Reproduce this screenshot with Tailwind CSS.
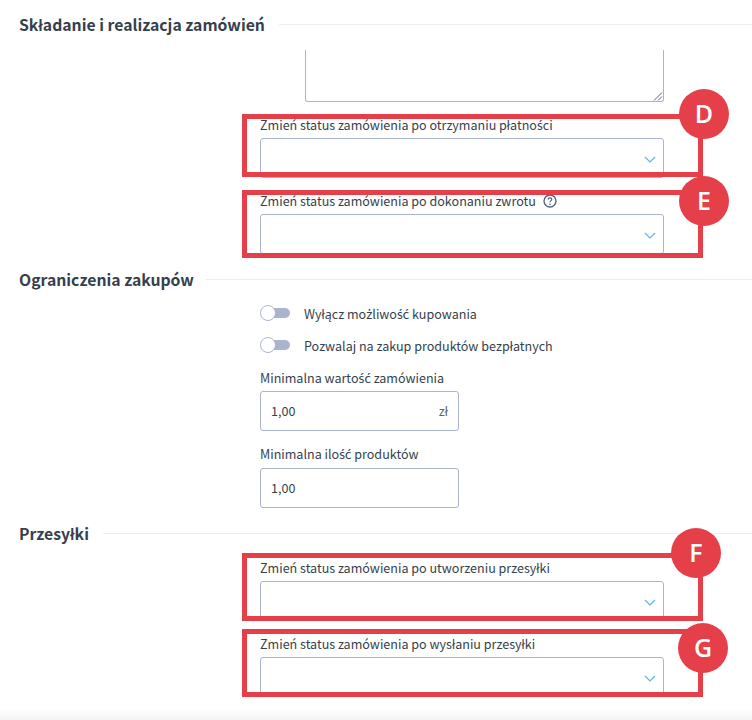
<!DOCTYPE html>
<html lang="pl">
  <head>
    <meta charset="UTF-8" />
    <title>Ustawienia zamówień</title>
    <script src="https://cdn.jsdelivr.net/npm/@tailwindcss/browser@4"></script>
  </head>
  <body class="bg-white font-['Noto_Sans_CJK_SC','Noto_Sans',sans-serif] text-[#363f4d] overflow-hidden">
    <div class="relative h-[720px] w-[752px] overflow-hidden">
      <!-- Składanie i realizacja zamówień -->
      <section class="h-[268px]">
        <div class="flex items-center gap-[14px] pl-[19px] pt-[14px]">
          <h2 class="text-[15.75px] leading-[22px] font-semibold whitespace-nowrap">Składanie i realizacja zamówień</h2>
          <div class="mb-[2px] h-px flex-1 bg-[#ebedf0]"></div>
        </div>
        <div class="relative ml-[305px] mt-[14px] h-[52px] w-[359px] rounded-b-[3px] border border-t-0 border-[#abb4cf]">
          <svg class="absolute right-0 bottom-0" width="10" height="10" viewBox="0 0 10 10" fill="none" stroke="#5c3a70" stroke-width="0.9"><path d="M1 9.5 9 1.5M5 9.5 9 5.5"/></svg>
        </div>
        <div class="ml-[260px] mt-[14px] w-[404px]">
          <label class="block text-[12.55px] leading-[18px] whitespace-nowrap">Zmień status zamówienia po otrzymaniu płatno<span class="font-['Lato',sans-serif] text-[13.5px]">ś</span>ci</label>
          <div class="mt-[4px] flex h-[40px] items-center justify-end rounded-[3px] border border-[#abb4cf] pr-[7px] pt-[3px]">
            <svg width="12" height="7" viewBox="0 0 12 7" fill="none" stroke="#5cb4e6" stroke-width="1.2"><path d="M1 1 6 6 11 1"/></svg>
          </div>
        </div>
        <div class="ml-[260px] mt-[14px] w-[404px]">
          <label class="flex items-center gap-[7px] text-[12.55px] leading-[18px] whitespace-nowrap">Zmień status zamówienia po dokonaniu zwrotu
            <svg width="14" height="14" viewBox="0 0 14 14" fill="none"><circle cx="7" cy="7" r="6" stroke="#4f5f82" stroke-width="1.3"/><path d="M5.2 5.6C5.3 4.5 6.1 3.9 7 3.9s1.8.6 1.8 1.6C8.8 6.7 7 6.6 7 8.2" stroke="#4f5f82" stroke-width="1.2"/><circle cx="7" cy="10.2" r=".8" fill="#4f5f82"/></svg>
          </label>
          <div class="mt-[4px] flex h-[40px] items-center justify-end rounded-[3px] border border-[#abb4cf] pr-[7px] pt-[3px]">
            <svg width="12" height="7" viewBox="0 0 12 7" fill="none" stroke="#5cb4e6" stroke-width="1.2"><path d="M1 1 6 6 11 1"/></svg>
          </div>
        </div>
      </section>

      <!-- Ograniczenia zakupów -->
      <section class="h-[255px]">
        <div class="flex items-center gap-[12px] pl-[19px] pt-[1px]">
          <h2 class="text-[15.75px] leading-[22px] font-semibold whitespace-nowrap">Ograniczenia zakupów</h2>
          <div class="mb-[2px] h-px flex-1 bg-[#ebedf0]"></div>
        </div>
        <div class="ml-[260px] w-[404px]">
          <div class="mt-[13px] flex h-[20px] items-center gap-[14px] text-[12.55px] whitespace-nowrap">
            <span class="relative -mt-[2px] block h-[16px] w-[30px] shrink-0"><span class="absolute left-[4px] top-[3px] h-[10px] w-[26px] rounded-full bg-[#abb4cf]"></span><span class="absolute left-0 top-0 h-[16px] w-[16px] rounded-full border border-[#abb4cf] bg-white"></span></span>
            <span>Wyłącz mo<span class="font-['Lato',sans-serif] text-[13.5px]">ż</span>liwo<span class="font-['Lato',sans-serif] text-[13.5px]">ść</span> kupowania</span>
          </div>
          <div class="mt-[12px] flex h-[20px] items-center gap-[14px] text-[12.55px] whitespace-nowrap">
            <span class="relative -mt-[2px] block h-[16px] w-[30px] shrink-0"><span class="absolute left-[4px] top-[3px] h-[10px] w-[26px] rounded-full bg-[#abb4cf]"></span><span class="absolute left-0 top-0 h-[16px] w-[16px] rounded-full border border-[#abb4cf] bg-white"></span></span>
            <span>Pozwalaj na zakup produktów bezpłatnych</span>
          </div>
          <label class="mt-[13px] block text-[12.55px] leading-[18px] whitespace-nowrap">Minimalna warto<span class="font-['Lato',sans-serif] text-[13.5px]">ść</span> zamówienia</label>
          <div class="mt-[4px] flex h-[40px] w-[199px] items-center justify-between rounded-[3px] border border-[#abb4cf] px-[10px] text-[12.55px]">
            <span>1,00</span><span class="text-[#5d6675]">zł</span>
          </div>
          <label class="mt-[14px] block text-[12.55px] leading-[18px] whitespace-nowrap">Minimalna ilo<span class="font-['Lato',sans-serif] text-[13.5px]">ść</span> produktów</label>
          <div class="mt-[5px] flex h-[40px] w-[199px] items-center rounded-[3px] border border-[#abb4cf] pl-[10px] text-[12.55px]">1,00</div>
        </div>
      </section>

      <!-- Przesyłki -->
      <section>
        <div class="flex items-center gap-[14px] pl-[19px]">
          <h2 class="text-[15.75px] leading-[22px] font-semibold whitespace-nowrap">Przesyłki</h2>
          <div class="mb-[2px] h-px flex-1 bg-[#ebedf0]"></div>
        </div>
        <div class="ml-[260px] mt-[14px] w-[404px]">
          <label class="block text-[12.55px] leading-[18px] whitespace-nowrap">Zmień status zamówienia po utworzeniu przesyłki</label>
          <div class="mt-[4px] flex h-[40px] items-center justify-end rounded-[3px] border border-[#abb4cf] pr-[7px] pt-[3px]">
            <svg width="12" height="7" viewBox="0 0 12 7" fill="none" stroke="#5cb4e6" stroke-width="1.2"><path d="M1 1 6 6 11 1"/></svg>
          </div>
        </div>
        <div class="ml-[260px] mt-[14px] w-[404px]">
          <label class="block text-[12.55px] leading-[18px] whitespace-nowrap">Zmień status zamówienia po wysłaniu przesyłki</label>
          <div class="mt-[4px] flex h-[40px] items-center justify-end rounded-[3px] border border-[#abb4cf] pr-[7px] pt-[3px]">
            <svg width="12" height="7" viewBox="0 0 12 7" fill="none" stroke="#5cb4e6" stroke-width="1.2"><path d="M1 1 6 6 11 1"/></svg>
          </div>
        </div>
      </section>

      <div class="absolute inset-x-0 bottom-0 h-[12px] bg-linear-to-b from-white to-[#f5f5f6]"></div>

      <!-- annotation boxes -->
      <div class="absolute left-[242px] top-[114px] h-[63px] w-[461px] border-[5px] border-[#e5404a]"></div>
      <div class="absolute left-[242px] top-[190px] h-[68px] w-[461px] border-[5px] border-[#e5404a]"></div>
      <div class="absolute left-[242px] top-[553px] h-[68px] w-[461px] border-[5px] border-[#e5404a]"></div>
      <div class="absolute left-[242px] top-[629px] h-[68px] w-[461px] border-[5px] border-[#e5404a]"></div>
      <div class="absolute left-[679px] top-[89px] flex h-[50px] w-[50px] items-center justify-center rounded-full bg-[#e5404a] font-['Open_Sans',sans-serif] text-[25px] font-semibold text-white">D</div>
      <div class="absolute left-[679px] top-[176px] flex h-[50px] w-[50px] items-center justify-center rounded-full bg-[#e5404a] font-['Open_Sans',sans-serif] text-[25px] font-semibold text-white">E</div>
      <div class="absolute left-[671px] top-[528px] flex h-[50px] w-[50px] items-center justify-center rounded-full bg-[#e5404a] font-['Open_Sans',sans-serif] text-[25px] font-semibold text-white">F</div>
      <div class="absolute left-[678px] top-[623px] flex h-[50px] w-[50px] items-center justify-center rounded-full bg-[#e5404a] font-['Open_Sans',sans-serif] text-[25px] font-semibold text-white">G</div>
    </div>
  </body>
</html>
